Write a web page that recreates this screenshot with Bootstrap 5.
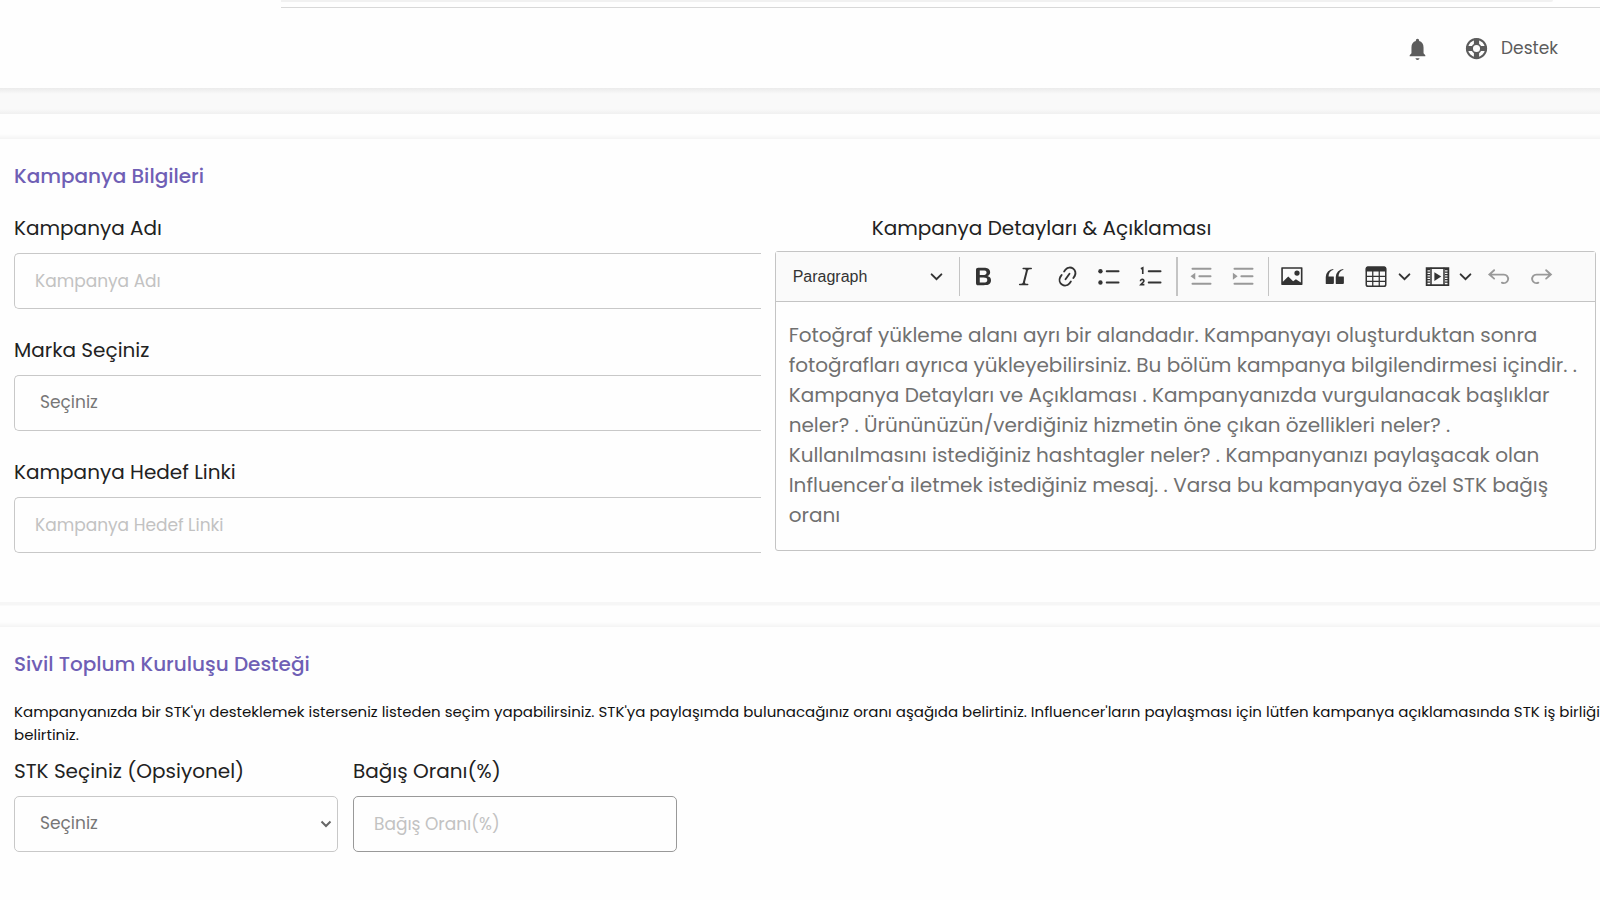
<!DOCTYPE html>
<html lang="tr">
<head>
<meta charset="utf-8">
<meta name="viewport" content="width=device-width, initial-scale=1">
<title>Kampanya Bilgileri</title>
<link href="https://cdn.jsdelivr.net/npm/bootstrap@5.3.0/dist/css/bootstrap.min.css" rel="stylesheet">
<style>
  body { font-family: Poppins, Inter, "Open Sans", sans-serif; font-size: 20px; line-height: 30px; font-weight: 400; color: #222; background: #fefefe; overflow-x: hidden; }
  .address-strip { height: 8px; margin-left: 281px; border-bottom: 1px solid #d8d8d8; }
  .address-pill { height: 2px; margin-right: 47px; background: #f1f1f1; border-bottom-right-radius: 2px; }
  .topbar { height: 80px; padding: 0 42px; font-size: 17px; }
  .topbar a { color: #5c5c5c; }
  .topbar .bell { margin-right: 34px; }
  .page-band { height: 26px; background: linear-gradient(#ebebeb, #f9f9f9 6px, #f9f9f9 21px, #f0f0f0); }
  .gap-band { height: 25px; background: linear-gradient(#fefefe 20px, #f4f4f4); }
  .gap-band.edge { background: linear-gradient(#f6f6f6 3px, #fefefe 4px, #fefefe 20px, #f4f4f4); }
  .panel { padding: 22px 4px 0 14px; }
  .panel-title { font-size: 20px; line-height: 30px; font-weight: 500; color: #6f5fb5; margin: 0 0 22px; }
  .form-split { grid-template-columns: 10fr 11fr; column-gap: 14px; padding-bottom: 49px; }
  .form-label { display: block; margin-bottom: 10px; }
  .field { height: 56px; padding: 0 20px; font-size: 17px; font-weight: 400; color: #777; background-color: #fefefe; border: 1px solid #c8c8c8; border-radius: 5px; }
  .field::placeholder { color: #c2c2c2; }
  select.field { padding-left: 25px; }
  .field.cut { border-right: 0; border-radius: 5px 0 0 5px; }
  .field.strong { border-color: #999; }
  .field.pick { background-image: url("data:image/svg+xml,%3Csvg xmlns='http://www.w3.org/2000/svg' viewBox='0 0 12 12'%3E%3Cpath d='M1.500 3.500 6 8l4.500-4.500' fill='none' stroke='%23666' stroke-width='2'/%3E%3C/svg%3E"); background-size: 12px 12px; background-position: right 5px center; }
  .stack { display: grid; row-gap: 26px; }
  .choices { column-gap: 15px; }
  .editor-label { padding-left: 97px; margin-bottom: 8px; }
  .editor { height: 300px; border: 1px solid #c4c4c4; border-radius: 3px; }
  .tools { height: 50px; background: #fafafa; border-bottom: 1px solid #c4c4c4; }
  .tools button { width: 42px; height: 42px; padding: 0; border: 0; background: none; color: #333; flex: none; display: flex; align-items: center; justify-content: center; }
  .tools svg { width: 25px; height: 25px; fill: currentColor; }
  .tools button.heading { width: 180px; padding: 0 13px 0 17px; justify-content: space-between; font: 16px "Liberation Sans", Arial, sans-serif; }
  .tools button.caret { width: 14px; margin-right: 5px; }
  .tools button.heading svg, .tools button.caret svg { width: 13px; height: 13px; flex: none; }
  .tools button:disabled { color: #999; }
  .bar { width: 1px; height: 39px; margin: 0 3px; background: #c4c4c4; flex: none; }
  .bar.wide { width: 2px; }
  .editor-text { padding: 18px 13px; color: #707070; white-space: nowrap; }
  .note { font-size: 15px; line-height: 23px; color: #111; margin: -1px 0 10px; white-space: nowrap; }
  .short { flex: 0 1 324px; }
</style>
</head>
<body>
<div class="address-strip"><div class="address-pill"></div></div>
<header class="topbar d-flex align-items-center justify-content-end">
  <a href="#" aria-label="Bildirimler" class="bell d-flex"><svg width="25" height="25" viewBox="0 0 24 24" fill="currentColor"><path d="M12 23a2 2 0 0 0 2-1.600h-4A2 2 0 0 0 12 23zm7.500-4.500-1.700-2V11c0-3.200-1.500-5.400-4.200-6.100v-.600a1.600 1.600 0 0 0-3.200 0v.600C7.700 5.600 6.200 7.800 6.200 11v5.500l-1.700 2v1h15z"/></svg></a>
  <a href="#" class="d-flex align-items-center text-decoration-none"><svg class="me-2" width="25" height="25" viewBox="0 0 24 24" fill="none" stroke="currentColor"><circle cx="12" cy="12" r="9.200" stroke-width="2"/><circle cx="12" cy="12" r="4.200" stroke-width="1.600"/><path d="M12 2.500V8M12 16v5.500M2.500 12H8M16 12h5.500" stroke-width="5"/></svg><span class="ps-1">Destek</span></a>
</header>
<div class="page-band"></div>
<div class="gap-band"></div>
<main>
  <section class="panel">
    <h1 class="panel-title">Kampanya Bilgileri</h1>
    <div class="form-split d-grid">
      <div class="stack align-content-start">
        <div><label class="form-label" for="ad">Kampanya Adı</label><input id="ad" class="form-control field cut" placeholder="Kampanya Adı"></div>
        <div><label class="form-label" for="marka">Marka Seçiniz</label><select id="marka" class="form-control field cut"><option>Seçiniz</option></select></div>
        <div><label class="form-label" for="link">Kampanya Hedef Linki</label><input id="link" class="form-control field cut" placeholder="Kampanya Hedef Linki"></div>
      </div>
      <div>
        <div class="editor-label">Kampanya Detayları &amp; Açıklaması</div>
        <div class="editor">
          <div class="tools d-flex align-items-center">
            <button type="button" class="heading">Paragraph<svg viewBox="0 0 12 12"><path d="M1.500 4 6 8.500 10.500 4" fill="none" stroke="currentColor" stroke-width="1.800" stroke-linecap="round"/></svg></button>
            <span class="bar"></span>
            <button type="button" aria-label="Bold"><svg viewBox="0 0 20 20"><path d="M10.187 17H5.773c-.637 0-1.092-.138-1.364-.415-.273-.277-.409-.718-.409-1.323V4.738c0-.617.140-1.062.419-1.332.279-.270.730-.406 1.354-.406h4.680c.690 0 1.288.041 1.793.124.506.083.960.242 1.360.478.341.197.644.447.906.750a3.262 3.262 0 0 1 .808 2.162c0 1.401-.722 2.426-2.167 3.075C15.050 10.175 16 11.315 16 13.010a3.756 3.756 0 0 1-2.296 3.504 6.100 6.100 0 0 1-1.517.377c-.571.073-1.238.110-2 .110zm-.217-6.217H7v4.087h3.069c1.977 0 2.965-.690 2.965-2.072 0-.707-.256-1.220-.768-1.537-.512-.319-1.277-.478-2.296-.478zM7 5.130v3.619h2.606c.729 0 1.292-.067 1.690-.200a1.600 1.600 0 0 0 .910-.765c.165-.267.247-.566.247-.897 0-.707-.260-1.176-.778-1.409-.519-.232-1.310-.348-2.375-.348H7z"/></svg></button>
            <button type="button" aria-label="Italic"><svg viewBox="0 0 20 20"><path d="m9.586 14.633.021.004c-.036.335.095.655.393.962.082.083.173.150.274.201h1.474a.6.6 0 1 1 0 1.200H5.304a.6.6 0 0 1 0-1.200h1.150c.474-.070.809-.182 1.005-.334.157-.122.291-.320.404-.597l2.416-9.550a1.053 1.053 0 0 0-.281-.823 1.120 1.120 0 0 0-.442-.296H8.150a.6.6 0 0 1 0-1.200h6.443a.6.6 0 1 1 0 1.200h-1.195c-.376.056-.650.155-.823.296-.215.175-.423.439-.623.790l-2.366 9.347z"/></svg></button>
            <button type="button" aria-label="Link"><svg viewBox="0 0 20 20"><path d="m11.077 15 .991-1.416a.75.75 0 1 1 1.229.860l-1.148 1.640a.748.748 0 0 1-.217.206 5.251 5.251 0 0 1-8.503-5.955.741.741 0 0 1 .120-.274l1.147-1.639a.75.75 0 1 1 1.228.860L4.933 10.700l.006.003a3.750 3.750 0 0 0 6.132 4.294l.006.004zm5.494-5.335a.748.748 0 0 1-.120.274l-1.147 1.639a.75.75 0 1 1-1.228-.860l.860-1.230a3.750 3.750 0 0 0-6.144-4.301l-.860 1.229a.75.75 0 0 1-1.229-.860l1.148-1.640a.748.748 0 0 1 .217-.206 5.251 5.251 0 0 1 8.503 5.955zm-4.563-2.532a.75.75 0 0 1 .184 1.045l-3.155 4.505a.75.75 0 1 1-1.229-.860l3.155-4.506a.75.75 0 0 1 1.045-.184z"/></svg></button>
            <button type="button" aria-label="Bulleted List"><svg viewBox="0 0 20 20"><circle cx="2.750" cy="5.750" r="1.750"/><circle cx="2.750" cy="14.750" r="1.750"/><path d="M7.750 5.750h9.500m-9.500 9h9.500" stroke="currentColor" stroke-width="1.500" stroke-linecap="round"/></svg></button>
            <button type="button" aria-label="Numbered List"><svg viewBox="0 0 20 20"><path d="M7.750 5.750h9.500m-9.500 9h9.500" stroke="currentColor" stroke-width="1.500" stroke-linecap="round"/><path d="M1.500 3.800 3 3v5M1.200 13.700c0-2 3-1.800 2.700 0-.1.900-1.600 1.600-2.500 2.800h2.900" fill="none" stroke="currentColor" stroke-width="1.300"/></svg></button>
            <span class="bar wide"></span>
            <button type="button" aria-label="Outdent" disabled><svg viewBox="0 0 20 20"><path d="M2.750 3.750h14.500m-9 6h9m-14.500 6h14.500" stroke="currentColor" stroke-width="1.500" stroke-linecap="round"/><path d="M5 7v5.500L1.200 9.750z"/></svg></button>
            <button type="button" aria-label="Indent" disabled><svg viewBox="0 0 20 20"><path d="M2.750 3.750h14.500m-9 6h9m-14.500 6h14.500" stroke="currentColor" stroke-width="1.500" stroke-linecap="round"/><path d="M1.500 7v5.500l3.800-2.750z"/></svg></button>
            <span class="bar"></span>
            <button type="button" aria-label="Image"><svg viewBox="0 0 20 20"><path fill-rule="evenodd" d="M1.500 2.500h16q.5 0 .5.500v13.200q0 .5-.5.500h-16q-.5 0-.5-.500V3q0-.5.5-.500zM2.300 3.800v10.400l4.300-4.200 3.900 3.800 2.200-1.700 4 2.600V3.800z"/><circle cx="13.600" cy="7.200" r="2.100"/></svg></button>
            <button type="button" aria-label="Block quote"><svg viewBox="0 0 20 20"><path d="M3 10.423a6.500 6.500 0 0 1 6.056-6.408l.038.670C6.448 5.423 5.354 7.663 5.220 10H9c.552 0 .5.432.5.986v4.511c0 .554-.448.503-1 .503h-5c-.552 0-.5-.449-.5-1.003v-4.574zm8 0a6.500 6.500 0 0 1 6.056-6.408l.038.670c-2.646.739-3.740 2.979-3.873 5.315H17c.552 0 .5.432.5.986v4.511c0 .554-.448.503-1 .503h-5c-.552 0-.5-.449-.5-1.003v-4.574z"/></svg></button>
            <button type="button" aria-label="Insert table"><svg viewBox="0 0 20 20"><rect x="1.800" y="2.600" width="15.600" height="15.200" rx="1.500" fill="none" stroke="currentColor" stroke-width="1.200"/><path d="M1.500 3.200q0-1.200 1.200-1.200h13.800q1.200 0 1.200 1.200V6H1.500z"/><path d="M2 9.900h15.500M2 13.800h15.500M7 5v12.500m5.200-12.500v12.500" stroke="currentColor"/></svg></button>
            <button type="button" class="caret" aria-label="Table options"><svg viewBox="0 0 12 12"><path d="M1.500 4 6 8.500 10.500 4" fill="none" stroke="currentColor" stroke-width="1.800" stroke-linecap="round"/></svg></button>
            <button type="button" aria-label="Insert media"><svg viewBox="0 0 20 20"><path d="M1.300 3.200h17.400v13.600H1.300z" fill="none" stroke="currentColor" stroke-width="1.400"/><path d="M4.800 3v14M15.200 3v14" stroke="currentColor" stroke-width="1.200"/><path d="M2.800 4v12M17.200 4v12" stroke="currentColor" stroke-width="2.600" stroke-dasharray="1 1"/><path d="M7.500 6.500v7L13 10z"/></svg></button>
            <button type="button" class="caret" aria-label="Media options"><svg viewBox="0 0 12 12"><path d="M1.500 4 6 8.500 10.500 4" fill="none" stroke="currentColor" stroke-width="1.800" stroke-linecap="round"/></svg></button>
            <button type="button" aria-label="Undo" disabled><svg viewBox="0 0 20 20"><path d="M6.500 5 2.700 8.400l3.800 3.300M3 8.500h11.200a3.400 3.400 0 1 1-1.500 6.400" fill="none" stroke="currentColor" stroke-width="1.500" stroke-linecap="round"/></svg></button>
            <button type="button" aria-label="Redo" disabled><svg viewBox="0 0 20 20"><path d="m14.500 5 3.800 3.400-3.800 3.300M18 8.500H6.800a3.400 3.400 0 1 0 1.500 6.400" fill="none" stroke="currentColor" stroke-width="1.500" stroke-linecap="round"/></svg></button>
          </div>
          <div class="editor-text">Fotoğraf yükleme alanı ayrı bir alandadır. Kampanyayı oluşturduktan sonra<br>fotoğrafları ayrıca yükleyebilirsiniz. Bu bölüm kampanya bilgilendirmesi içindir. .<br>Kampanya Detayları ve Açıklaması . Kampanyanızda vurgulanacak başlıklar<br>neler? . Ürününüzün/verdiğiniz hizmetin öne çıkan özellikleri neler? .<br>Kullanılmasını istediğiniz hashtagler neler? . Kampanyanızı paylaşacak olan<br>Influencer'a iletmek istediğiniz mesaj. . Varsa bu kampanyaya özel STK bağış<br>oranı</div>
        </div>
      </div>
    </div>
  </section>
  <div class="gap-band edge"></div>
  <section class="panel">
    <h2 class="panel-title">Sivil Toplum Kuruluşu Desteği</h2>
    <p class="note">Kampanyanızda bir STK'yı desteklemek isterseniz listeden seçim yapabilirsiniz. STK'ya paylaşımda bulunacağınız oranı aşağıda belirtiniz. Influencer'ların paylaşması için lütfen kampanya açıklamasında STK iş birliği<br>belirtiniz.</p>
    <div class="choices d-flex">
      <div class="short"><label class="form-label" for="stk">STK Seçiniz (Opsiyonel)</label><select id="stk" class="form-select field pick"><option>Seçiniz</option></select></div>
      <div class="short"><label class="form-label" for="oran">Bağış Oranı(%)</label><input id="oran" class="form-control field strong" placeholder="Bağış Oranı(%)"></div>
    </div>
  </section>
</main>
<script src="https://cdn.jsdelivr.net/npm/bootstrap@5.3.0/dist/js/bootstrap.bundle.min.js"></script>
</body>
</html>
